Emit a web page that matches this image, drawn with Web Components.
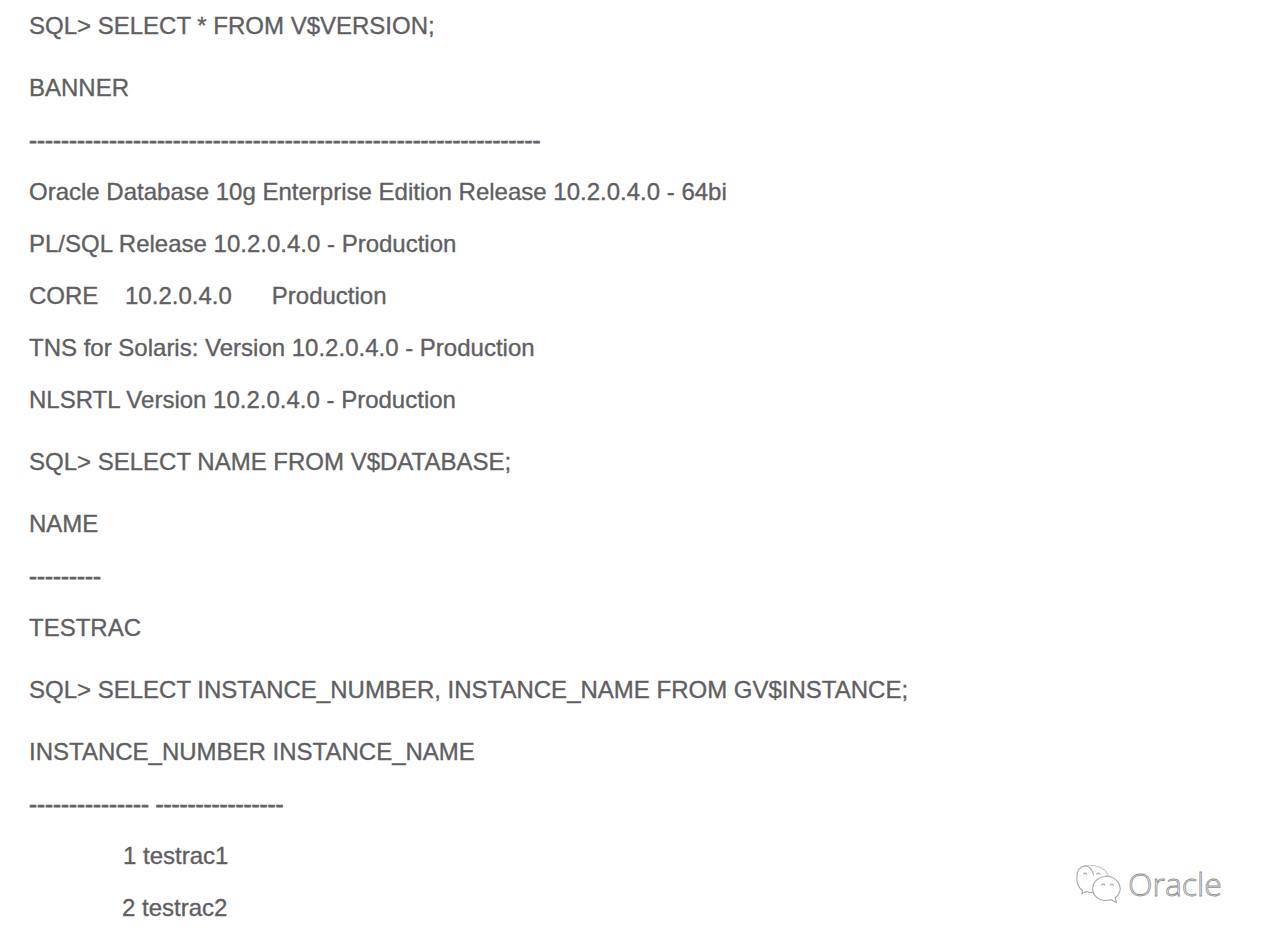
<!DOCTYPE html>
<html>
<head>
<meta charset="utf-8">
<style>
html, body { margin: 0; background: #fff; }
body { font-family: "Liberation Sans", Arial, sans-serif; overflow: hidden; height: 938px; }
</style>
</head>
<body>
<sql-page>
	<sql-line gap="0">SQL&gt; SELECT * FROM V$VERSION;</sql-line>
	<sql-line gap="36">BANNER</sql-line>
	<sql-line gap="26" rule>----------------------------------------------------------------</sql-line>
	<sql-line gap="26">Oracle Database 10g Enterprise Edition Release 10.2.0.4.0 - 64bi</sql-line>
	<sql-line gap="26">PL/SQL Release 10.2.0.4.0 - Production</sql-line>
	<sql-line gap="26">CORE&#160;&#160;&#160;&#160;10.2.0.4.0&#160;&#160;&#160;&#160;&#160;&#160;Production</sql-line>
	<sql-line gap="26">TNS for Solaris: Version 10.2.0.4.0 - Production</sql-line>
	<sql-line gap="26">NLSRTL Version 10.2.0.4.0 - Production</sql-line>
	<sql-line gap="36">SQL&gt; SELECT NAME FROM V$DATABASE;</sql-line>
	<sql-line gap="36">NAME</sql-line>
	<sql-line gap="26" rule>---------</sql-line>
	<sql-line gap="26">TESTRAC</sql-line>
	<sql-line gap="36">SQL&gt; SELECT INSTANCE_NUMBER, INSTANCE_NAME FROM GV$INSTANCE;</sql-line>
	<sql-line gap="36">INSTANCE_NUMBER INSTANCE_NAME</sql-line>
	<sql-line gap="26" rule>--------------- ----------------</sql-line>
	<sql-line gap="26" indent="94">1 testrac1</sql-line>
	<sql-line gap="26" indent="93">2 testrac2</sql-line>
	<wechat-mark></wechat-mark>
</sql-page>
<script>
class SqlPage extends HTMLElement {
	constructor() {
		super();
		this.attachShadow({ mode: 'open' });
		this.shadowRoot.innerHTML = `
		<style>
			:host { display: flex; flex-direction: column; position: relative; height: 938px; padding: 13px 0 0 29px; box-sizing: border-box; overflow: hidden; }
		</style>
		<slot></slot>`;
	}
}

class SqlLine extends HTMLElement {
	constructor() {
		super();
		this.attachShadow({ mode: 'open' });
		this.shadowRoot.innerHTML = `
		<style>
			:host { display: block; font-size: 24px; line-height: 26px; color: #5f5f63; -webkit-text-stroke: 0.35px #5f5f63; white-space: nowrap; }
			:host([rule]) { -webkit-text-stroke: 0.8px #66666a; }
		</style>
		<slot></slot>`;
	}

	connectedCallback() {
		this.style.marginTop = (this.getAttribute('gap') || 0) + 'px';
		this.style.paddingLeft = (this.getAttribute('indent') || 0) + 'px';
	}
}

// marca de agua: texto hueco con borde fino
class WechatMark extends HTMLElement {
	constructor() {
		super();
		this.attachShadow({ mode: 'open' });
		this.shadowRoot.innerHTML = `
		<style>
			:host { position: absolute; left: 1076px; top: 864px; display: flex; align-items: center; gap: 6px; font-family: "Open Sans", sans-serif; font-weight: 300; font-size: 32px; line-height: 40px; color: #f4f4f4; -webkit-text-stroke: 0.8px #8f8f8f; }
			svg { width: 46px; height: 38px; flex: none; }
		</style>
		<svg viewBox="0 0 46 38" fill="none" stroke="#a8a8a8" stroke-width="1.1">
			<path d="M17.500 10.500C17 5 13 .8 9 .8 4 1.500 .8 6 .8 13c0 5.500 2.200 10 5.700 12.500l-.6 3.300 4.400-2.300c2 .9 4.500 1.300 7 1"/>
			<path d="M8 1.200C14 -1 24 1 29 5.500c2 2 3.200 4 3.700 6.300" opacity=".6"/>
			<path d="M30 11.500c-7.500 0-13.300 5.500-13.300 12.200S22.500 35.500 30 35.500c1.800 0 3.500-.3 5-.8l5.500 2.800-1.300-4.800c3-2.300 5-5.400 5-9 0-6.700-6.700-12.700-14.200-12.700z"/>
			<path d="M7.500 9.500a1.800 1.800 0 0 1 3.500 0M20.500 9.500a1.800 1.800 0 0 1 3.500 0M25.500 20.500a1.800 1.800 0 0 1 3.500 0M34 20.500a1.800 1.800 0 0 1 3.500 0"/>
		</svg>
		<span>Oracle</span>`;
	}
}

customElements.define('sql-page', SqlPage);
customElements.define('sql-line', SqlLine);
customElements.define('wechat-mark', WechatMark);
</script>
</body>
</html>
